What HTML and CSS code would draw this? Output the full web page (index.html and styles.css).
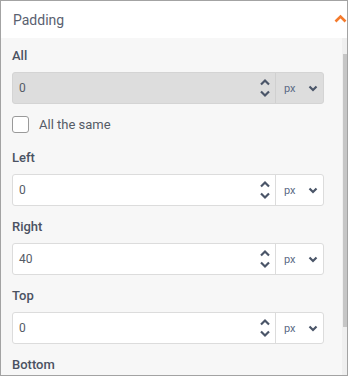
FILE: index.html
```html
<!DOCTYPE html>
<html lang="en">
<head>
  <meta charset="UTF-8">
  <title>Padding</title>
  <link rel="stylesheet" href="styles.css">
</head>
<body>

  <div class="panel">
    <div class="panel-head">
      <span class="panel-title">Padding</span>
      <svg class="collapse" width="13" height="9" viewBox="0 0 13 9"><path d="M1.5 7.5 L6.5 2.5 L11.5 7.5" fill="none" stroke="#f47a2c" stroke-width="2.6"/></svg>
    </div>

    <div class="panel-body">
      <div class="content">

        <div class="group">
          <div class="label">All</div>
          <div class="field disabled">
            <span class="value">0</span>
            <span class="spin">
              <svg width="12" height="20" viewBox="0 0 12 20"><path d="M2 6.5 L6 2.5 L10 6.5 M2 13.5 L6 17.5 L10 13.5" fill="none" stroke="#4a5568" stroke-width="2.2"/></svg>
            </span>
            <span class="unit">px
              <svg width="10" height="7" viewBox="0 0 10 7"><path d="M1.5 1.5 L5 5 L8.5 1.5" fill="none" stroke="#4a5568" stroke-width="2.2"/></svg>
            </span>
          </div>
        </div>

        <label class="check-row">
          <span class="checkbox"></span>
          <span>All the same</span>
        </label>

        <div class="group">
          <div class="label">Left</div>
          <div class="field">
            <span class="value">0</span>
            <span class="spin">
              <svg width="12" height="20" viewBox="0 0 12 20"><path d="M2 6.5 L6 2.5 L10 6.5 M2 13.5 L6 17.5 L10 13.5" fill="none" stroke="#4a5568" stroke-width="2.2"/></svg>
            </span>
            <span class="unit">px
              <svg width="10" height="7" viewBox="0 0 10 7"><path d="M1.5 1.5 L5 5 L8.5 1.5" fill="none" stroke="#4a5568" stroke-width="2.2"/></svg>
            </span>
          </div>
        </div>

        <div class="group">
          <div class="label">Right</div>
          <div class="field">
            <span class="value">40</span>
            <span class="spin">
              <svg width="12" height="20" viewBox="0 0 12 20"><path d="M2 6.5 L6 2.5 L10 6.5 M2 13.5 L6 17.5 L10 13.5" fill="none" stroke="#4a5568" stroke-width="2.2"/></svg>
            </span>
            <span class="unit">px
              <svg width="10" height="7" viewBox="0 0 10 7"><path d="M1.5 1.5 L5 5 L8.5 1.5" fill="none" stroke="#4a5568" stroke-width="2.2"/></svg>
            </span>
          </div>
        </div>

        <div class="group">
          <div class="label">Top</div>
          <div class="field">
            <span class="value">0</span>
            <span class="spin">
              <svg width="12" height="20" viewBox="0 0 12 20"><path d="M2 6.5 L6 2.5 L10 6.5 M2 13.5 L6 17.5 L10 13.5" fill="none" stroke="#4a5568" stroke-width="2.2"/></svg>
            </span>
            <span class="unit">px
              <svg width="10" height="7" viewBox="0 0 10 7"><path d="M1.5 1.5 L5 5 L8.5 1.5" fill="none" stroke="#4a5568" stroke-width="2.2"/></svg>
            </span>
          </div>
        </div>

        <div class="group">
          <div class="label">Bottom</div>
        </div>

      </div>
      <div class="scrollbar">
        <div class="thumb"></div>
      </div>
    </div>
  </div>

</body>
</html>
```

FILE: styles.css
```css
body {
  margin: 0;
  padding: 0;
  font-family: Roboto, 'Liberation Sans', sans-serif;
  background: #fff;
}
.panel {
  width: 348px;
  height: 376px;
  box-sizing: border-box;
  border: 1px solid #a3a3a3;
  display: flex;
  flex-direction: column;
  overflow: hidden;
}
.panel-head {
  height: 37px;
  flex: none;
  background: #fff;
  display: flex;
  align-items: center;
  justify-content: space-between;
  padding: 0 0 0 12px;
}
.panel-title {
  font-size: 14px;
  color: #5a6170;
}
.collapse {
  margin-top: -2px;
}
.panel-body {
  flex: 1;
  background: #f7f7f7;
  display: flex;
  overflow: hidden;
}
.content {
  flex: 1;
  display: flex;
  flex-direction: column;
  padding: 10px 0 0 11px;
}
.scrollbar {
  width: 5px;
  background: #efefef;
  padding-top: 16px;
}
.thumb {
  width: 4px;
  margin-left: 1px;
  height: 273px;
  background: #c6c6c6;
}
.group {
  margin-bottom: 13px;
}
.label {
  font-size: 13px;
  font-weight: 500;
  line-height: 16px;
  color: #4b5262;
  margin-bottom: 8px;
}
.field {
  width: 312px;
  height: 32px;
  box-sizing: border-box;
  border: 1px solid #dcdcdc;
  border-radius: 3px;
  background: #fff;
  display: flex;
  align-items: center;
}
.field.disabled {
  background: #dddddd;
  border-color: #d4d4d4;
}
.value {
  flex: 1;
  font-size: 12px;
  color: #555b66;
  padding-left: 6px;
}
.spin {
  width: 12px;
  height: 20px;
  margin-right: 4px;
}
.spin svg {
  display: block;
}
.unit {
  width: 48px;
  height: 100%;
  box-sizing: border-box;
  border-left: 1px solid #dcdcdc;
  display: flex;
  align-items: center;
  justify-content: space-between;
  padding: 0 5px 0 8px;
  font-size: 11px;
  color: #5b6a85;
}
.field.disabled .unit {
  border-left-color: #d0d0d0;
}
.check-row {
  display: flex;
  align-items: center;
  gap: 10px;
  font-size: 13px;
  color: #555b66;
  margin: -1px 0 17px 0;
}
.checkbox {
  width: 15px;
  height: 15px;
  border: 1px solid #9a9a9a;
  border-radius: 3px;
  background: #fff;
}
```
